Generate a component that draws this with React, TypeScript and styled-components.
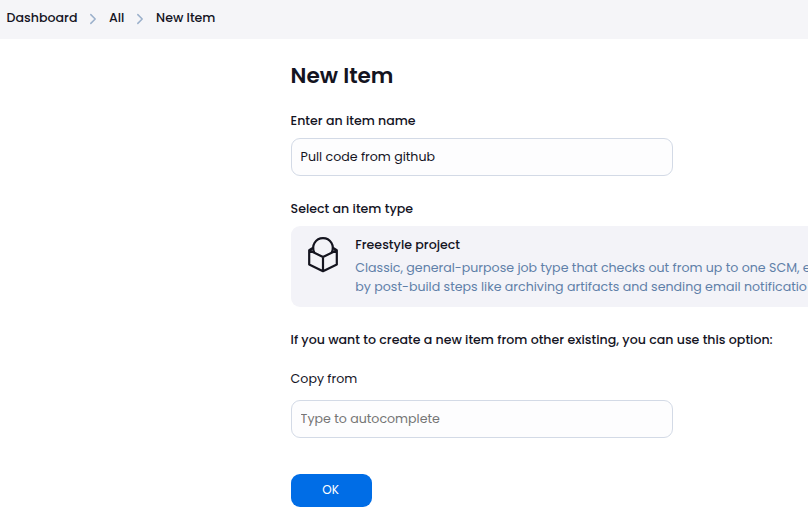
import React from "react";
import styled, { createGlobalStyle } from "styled-components";

const GlobalStyle = createGlobalStyle`
  * { box-sizing: border-box; }
  html, body { margin: 0; height: 530px; overflow: hidden; background: #fff; }
  body, input, button {
    font-family: Poppins, Inter, sans-serif;
    font-feature-settings: "cv11" 1;
    font-size: 12.6px;
    line-height: 20px;
    color: #14141f;
  }
`;

const Breadcrumbs = styled.nav`
  display: flex;
  height: 39px;
  padding: 8px 0 0 6.6px;
  background: #f5f5f8;
`;

const Crumb = styled.span<{ $width: number }>`
  flex: none;
  width: ${(p) => p.$width}px;
  font-weight: 500;
  white-space: nowrap;
`;

const Chevron = styled.svg`
  flex: none;
  width: 8px;
  height: 12px;
  margin: 5px 11.7px 0 0;
  fill: none;
  stroke: #9bb0cb;
  stroke-width: 1.5;
  stroke-linecap: round;
  stroke-linejoin: round;
`;

const Form = styled.main`
  display: flex;
  flex-direction: column;
  align-items: flex-start;
  padding: 21px 0 0 290.6px;
  overflow: hidden;
`;

const Title = styled.h1`
  margin: 0 0 20px;
  font-size: 21.6px;
  font-weight: 600;
  line-height: 31px;
`;

const Label = styled.label<{ $gap: number; $weight?: number }>`
  margin-bottom: ${(p) => p.$gap}px;
  font-weight: ${(p) => p.$weight ?? 500};
  white-space: nowrap;
`;

const Field = styled.input<{ $gap: number }>`
  width: 382px;
  height: 38px;
  margin: 0 0 ${(p) => p.$gap}px;
  padding: 0 9px;
  border: 1px solid #d3dae6;
  border-radius: 9px;
  background: #fdfdfe;
  outline: none;
  &::placeholder { color: #757575; opacity: 1; }
`;

const TypeCard = styled.section`
  display: flex;
  align-self: stretch;
  height: 81px;
  margin-bottom: 23px;
  padding: 9px 0 0 15.4px;
  border-radius: 9px 0 0 9px;
  background: #f3f3f8;
  overflow: hidden;
`;

const CubeIcon = styled.svg`
  flex: none;
  width: 34px;
  height: 40px;
  margin: -1px 15.3px 0 0;
  fill: none;
  stroke: #14141f;
  stroke-width: 2.2;
  stroke-linejoin: round;
`;

const CardText = styled.div`
  white-space: nowrap;
`;

const CardTitle = styled.div`
  margin-bottom: 3px;
  font-weight: 500;
`;

const Description = styled.div`
  line-height: 19px;
  color: #5f80a8;
`;

const SubmitButton = styled.button`
  width: 81px;
  height: 33px;
  padding: 0 1px 1px 0;
  border: 0;
  border-radius: 9px;
  background: #006de6;
  color: #fff;
  font-size: 12px;
`;

const Separator = () => (
  <Chevron viewBox="0 0 8 12">
    <path d="M1.8 1.6 6.2 6 1.8 10.4" />
  </Chevron>
);

export default function App() {
  return (
    <>
      <GlobalStyle />
      <Breadcrumbs>
        <Crumb $width={82.7}>Dashboard</Crumb>
        <Separator />
        <Crumb $width={27.4}>All</Crumb>
        <Separator />
        <Crumb $width={70}>New Item</Crumb>
      </Breadcrumbs>
      <Form>
        <Title>New Item</Title>
        <Label $gap={7}>Enter an item name</Label>
        <Field $gap={23} defaultValue="Pull code from github" />
        <Label $gap={7}>Select an item type</Label>
        <TypeCard>
          <CubeIcon viewBox="306 234 34 40">
            <path d="M313.2 247.8 309.2 250.2V264.6L323 271.2 336.8 264.6V250.2L332.8 247.8M309.2 250.2 323 257 336.8 250.2M323 257V271" />
            <path d="M314.3 252.4A9.8 9.8 0 1 1 331.7 252.4" />
          </CubeIcon>
          <CardText>
            <CardTitle>Freestyle project</CardTitle>
            <Description>Classic, general-purpose job type that checks out from up to one SCM, e</Description>
            <Description>by post-build steps like archiving artifacts and sending email notificatio</Description>
          </CardText>
        </TypeCard>
        <Label $gap={19}>If you want to create a new item from other existing, you can use this option:</Label>
        <Label $gap={11} $weight={400}>Copy from</Label>
        <Field $gap={36} placeholder="Type to autocomplete" />
        <SubmitButton>OK</SubmitButton>
      </Form>
    </>
  );
}
